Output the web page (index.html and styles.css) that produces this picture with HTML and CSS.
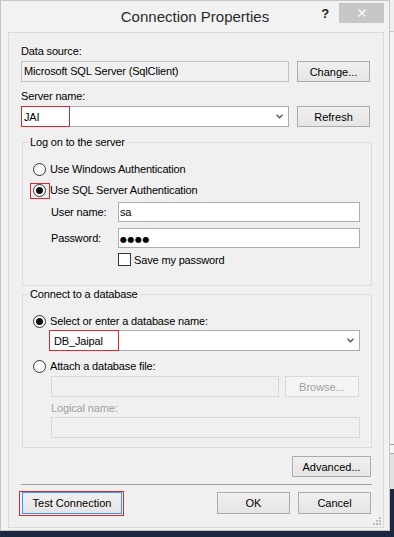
FILE: index.html
```html
<!DOCTYPE html>
<html lang="en">
<head>
    <meta charset="UTF-8">
    <meta name="viewport" content="width=device-width, initial-scale=1.0">
    <title>Connection Properties</title>
    <link rel="stylesheet" href="styles.css">
</head>
<body>
    <div class="desktop">
        <div class="window">
            <div class="titlebar">
                <span class="title">Connection Properties</span>
                <div class="caption-buttons">
                    <span class="help">?</span>
                    <span class="close">
                        <svg width="8" height="8" viewBox="0 0 8 8"><path d="M0.5 0.5L7.5 7.5M7.5 0.5L0.5 7.5" stroke="#fff" stroke-width="1.3" fill="none"/></svg>
                    </span>
                </div>
            </div>

            <div class="client">
                <div class="label first">Data source:</div>
                <div class="field-row">
                    <div class="textbox readonly">Microsoft SQL Server (SqlClient)</div>
                    <button class="btn">Change...</button>
                </div>

                <div class="label second">Server name:</div>
                <div class="field-row">
                    <div class="combo server">
                        <span>JAI</span>
                        <svg class="chevron" width="7" height="5" viewBox="0 0 7 5"><path d="M0.6 0.8L3.5 3.8L6.4 0.8" stroke="#555" stroke-width="1.4" fill="none"/></svg>
                        <span class="mark mark-server"></span>
                    </div>
                    <button class="btn">Refresh</button>
                </div>

                <fieldset class="group logon">
                    <legend>Log on to the server</legend>
                    <div class="option">
                        <span class="radio"></span>
                        <span>Use Windows Authentication</span>
                    </div>
                    <div class="option second-option">
                        <span class="radio checked marked"></span>
                        <span>Use SQL Server Authentication</span>
                    </div>
                    <div class="login-row user">
                        <span class="login-label">User name:</span>
                        <div class="textbox">sa</div>
                    </div>
                    <div class="login-row password">
                        <span class="login-label">Password:</span>
                        <div class="textbox"><span class="dots">●●●●</span></div>
                    </div>
                    <div class="save-row">
                        <span class="checkbox"></span>
                        <span>Save my password</span>
                    </div>
                </fieldset>

                <fieldset class="group database">
                    <legend>Connect to a database</legend>
                    <div class="option">
                        <span class="radio checked"></span>
                        <span>Select or enter a database name:</span>
                    </div>
                    <div class="combo db-name">
                        <span>DB_Jaipal</span>
                        <svg class="chevron" width="7" height="5" viewBox="0 0 7 5"><path d="M0.6 0.8L3.5 3.8L6.4 0.8" stroke="#555" stroke-width="1.4" fill="none"/></svg>
                        <span class="mark mark-db"></span>
                    </div>
                    <div class="option attach">
                        <span class="radio"></span>
                        <span>Attach a database file:</span>
                    </div>
                    <div class="file-row">
                        <div class="textbox disabled file-path"></div>
                        <button class="btn disabled browse">Browse...</button>
                    </div>
                    <div class="logical-label">Logical name:</div>
                    <div class="textbox disabled logical"></div>
                </fieldset>

                <div class="advanced-row">
                    <button class="btn advanced">Advanced...</button>
                </div>

                <div class="separator"></div>

                <div class="bottom-row">
                    <button class="btn test">Test Connection</button>
                    <button class="btn">OK</button>
                    <button class="btn">Cancel</button>
                </div>

                <svg class="grip" width="10" height="10" viewBox="0 0 10 10">
                    <rect x="7" y="1" width="2" height="2" fill="#bdbdbd"/>
                    <rect x="4" y="4" width="2" height="2" fill="#bdbdbd"/>
                    <rect x="7" y="4" width="2" height="2" fill="#bdbdbd"/>
                    <rect x="1" y="7" width="2" height="2" fill="#bdbdbd"/>
                    <rect x="4" y="7" width="2" height="2" fill="#bdbdbd"/>
                    <rect x="7" y="7" width="2" height="2" fill="#bdbdbd"/>
                </svg>
            </div>
        </div>
        <div class="backdrop"></div>
    </div>
    <div class="taskbar"></div>
</body>
</html>
```

FILE: styles.css
```css
body {
    margin: 0;
    background: #1c2842;
    font-family: "Liberation Sans", Arial, sans-serif;
    font-size: 11px;
    letter-spacing: -0.15px;
    color: #000;
}

.desktop {
    display: flex;
    height: 531px;
}

.window {
    width: 390px;
    flex: none;
    box-sizing: border-box;
    border: 1px solid #c6c6c6;
    background: #f2f2f2;
    display: flex;
    flex-direction: column;
}

.backdrop {
    flex: 1;
    background: linear-gradient(to bottom,
        #efefef 0, #efefef 31px, #c9c9c9 31px, #c9c9c9 32px,
        #f3f3f3 32px, #f3f3f3 444px, #9c9c9c 444px, #9c9c9c 445px,
        #f3f3f3 445px, #f3f3f3 453px, #a9a9a9 453px, #a9a9a9 454px,
        #e2e2e2 454px, #e2e2e2 489px, #1c2842 489px);
}

.taskbar {
    height: 6px;
    background: #1c2842;
}

/* title bar */
.titlebar {
    position: relative;
    height: 31px;
    flex: none;
}

.title {
    display: block;
    text-align: center;
    font-size: 15px;
    letter-spacing: 0;
    line-height: 31px;
    color: #2a2a2a;
}

.caption-buttons {
    position: absolute;
    top: 2px;
    right: 5px;
    display: flex;
    align-items: center;
    gap: 10px;
}

.help {
    font-weight: bold;
    font-size: 13px;
    color: #222;
}

.close {
    width: 45px;
    height: 20px;
    background: #c7c7c7;
    display: flex;
    align-items: center;
    justify-content: center;
}

/* dialog body */
.client {
    flex: 1;
    position: relative;
    margin: 0 5px 2px 7px;
    padding: 0 12px;
    border: 1px solid #dadada;
    background: #f0f0f0;
}

.label {
    line-height: 14px;
}

.label.first {
    margin-top: 11px;
}

.label.second {
    margin-top: 7px;
}

.field-row {
    display: flex;
    gap: 8px;
    margin-top: 3px;
    height: 21px;
}

.field-row .textbox,
.field-row .combo {
    width: 268px;
    flex: none;
}

.textbox {
    box-sizing: border-box;
    height: 20px;
    line-height: 18px;
    padding: 0 2px;
    border: 1px solid #abadb3;
    background: #fff;
    white-space: nowrap;
}

.field-row .textbox {
    height: 21px;
    line-height: 19px;
}

.textbox.readonly {
    background: #f0f0f0;
    border-color: #c2c2c2;
}

.textbox.disabled {
    background: #f0f0f0;
    border-color: #d9d9d9;
}

.combo {
    position: relative;
    box-sizing: border-box;
    height: 21px;
    display: flex;
    align-items: center;
    justify-content: space-between;
    padding: 0 5px 0 2px;
    border: 1px solid #abadb3;
    background: #fff;
}

.chevron {
    display: block;
}

.mark {
    position: absolute;
    top: -1px;
    bottom: -1px;
    left: -1px;
    border: 1px solid #e3262e;
}

.mark-server {
    width: 47px;
}

.mark-db {
    width: 68px;
}

.btn {
    box-sizing: border-box;
    width: 73px;
    height: 21px;
    padding: 0;
    font: inherit;
    color: #000;
    border: 1px solid #acacac;
    background: linear-gradient(#f0f0f0, #e5e5e5);
}

.btn.disabled {
    color: #a0a0a0;
    border-color: #d9d9d9;
    background: #f4f4f4;
}

/* group boxes */
.group {
    margin: 8px -1px 0 1px;
    padding: 12px 11px 18px 5px;
    border: 1px solid #dcdcdc;
    min-width: 0;
}

.group legend {
    padding: 0 2px;
    line-height: 14px;
}

.group.database {
    margin-top: 1px;
    padding-bottom: 9px;
}

.option {
    display: flex;
    align-items: center;
    gap: 4px;
    height: 16px;
    padding-left: 5px;
}

.second-option {
    margin-top: 5px;
}

.radio {
    position: relative;
    box-sizing: border-box;
    width: 13px;
    height: 13px;
    border: 1px solid #333;
    border-radius: 50%;
    background: #fff;
}

.radio.checked::before {
    content: "";
    position: absolute;
    left: 2px;
    top: 2px;
    width: 7px;
    height: 7px;
    border-radius: 50%;
    background: #111;
}

.radio.marked::after {
    content: "";
    position: absolute;
    left: -4px;
    right: -5px;
    top: -2px;
    bottom: -3px;
    border: 1px solid #e3262e;
}

.login-row {
    display: flex;
    align-items: center;
    height: 20px;
    padding-left: 23px;
}

.login-row.user {
    margin-top: 4px;
}

.login-row.password {
    margin-top: 6px;
}

.login-label {
    width: 67px;
    flex: none;
}

.login-row .textbox {
    flex: 1;
    padding-left: 1px;
}

.dots {
    font-family: "DejaVu Sans", sans-serif;
    font-size: 8px;
    letter-spacing: 0.5px;
}

.save-row {
    display: flex;
    align-items: center;
    gap: 3px;
    height: 15px;
    margin-top: 4px;
    padding-left: 90px;
}

.checkbox {
    box-sizing: border-box;
    width: 13px;
    height: 13px;
    border: 1px solid #333;
    background: #fff;
}

.combo.db-name {
    margin: 1px 0 0 21px;
    padding-left: 4px;
}

.attach {
    margin-top: 7px;
}

.file-row {
    display: flex;
    gap: 6px;
    margin-top: 2px;
    padding-left: 23px;
}

.file-path {
    width: 228px;
    height: 21px;
}

.browse {
    width: 74px;
}

.logical-label {
    margin-top: 4px;
    padding-left: 23px;
    line-height: 14px;
    color: #a0a0a0;
}

.textbox.logical {
    margin: 2px 0 0 23px;
    height: 21px;
}

/* footer */
.advanced-row {
    display: flex;
    justify-content: flex-end;
    margin-top: 8px;
}

.btn.advanced {
    width: 79px;
}

.separator {
    height: 1px;
    margin: 7px -1px 0 0;
    background: #a0a0a0;
}

.bottom-row {
    display: flex;
    gap: 8px;
    margin-top: 7px;
}

.bottom-row .btn {
    height: 22px;
}

.btn.test {
    position: relative;
    width: 100px;
    margin: 0 auto 0 1px;
    border-color: #3399ff;
}

.btn.test::after {
    content: "";
    position: absolute;
    left: -4px;
    right: -3px;
    top: -2px;
    bottom: -3px;
    border: 1px solid #e3262e;
}

.grip {
    position: absolute;
    right: 1px;
    bottom: 1px;
}
```
